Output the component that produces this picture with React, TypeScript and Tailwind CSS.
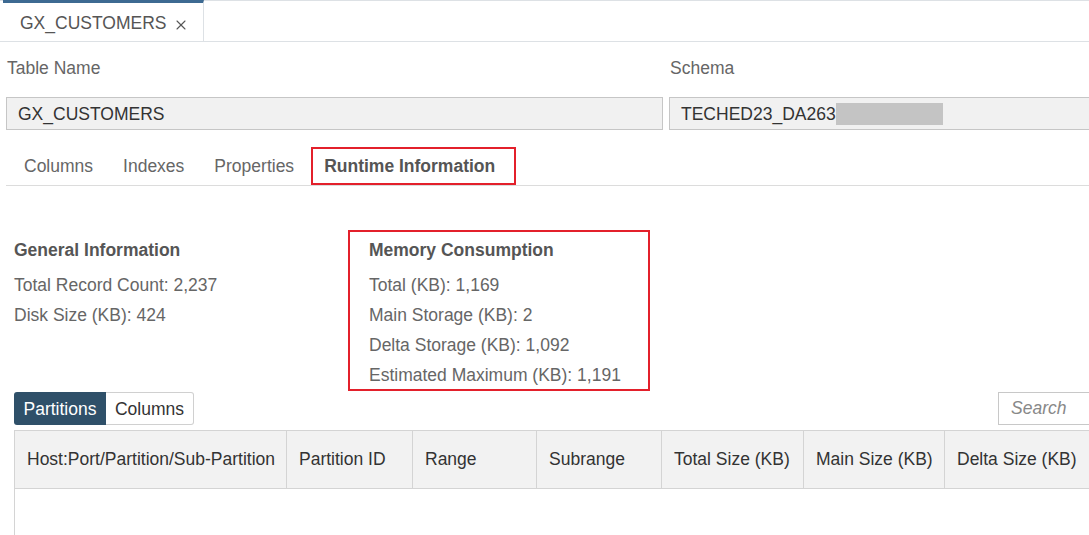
import { X } from "lucide-react";

const subTabs = ["Columns", "Indexes", "Properties"];

const headers = [
  { label: "Host:Port/Partition/Sub-Partition", w: "w-[272px]" },
  { label: "Partition ID", w: "w-[126px]" },
  { label: "Range", w: "w-[124px]" },
  { label: "Subrange", w: "w-[125px]" },
  { label: "Total Size (KB)", w: "w-[142px]" },
  { label: "Main Size (KB)", w: "w-[141px]" },
  { label: "Delta Size (KB)", w: "w-[160px]" },
];

export default function App() {
  return (
    <div
      className="w-[1089px] h-[535px] overflow-hidden bg-white text-[17.5px] text-[#666]"
      style={{ fontFamily: '"Liberation Sans", Arial, sans-serif' }}
    >
      {/* Editor tab bar */}
      <div className="flex h-[42px] border-t border-b border-[#dde1e5]">
        <div className="flex items-center pt-[2px] pl-[17px] ml-[3px] w-[201px] border-t-[3px] border-t-[#3d6a92] border-r border-r-[#dde1e5] -mt-px">
          <span className="text-[#555]">GX_CUSTOMERS</span>
          <X className="shrink-0 ml-[6px] mt-[4px] h-[16px] w-[16px] text-[#555]" strokeWidth={1.6} />
        </div>
      </div>

      {/* Name / schema */}
      <div className="flex gap-[6px] px-[6px]">
        <div className="w-[657px] shrink-0">
          <div className="h-[55px] leading-[53px] pl-px">Table Name</div>
          <div className="h-[33px] border border-[#c6c6c6] bg-[#f1f1f1] pl-[11px] leading-[33px] text-[#333]">
            GX_CUSTOMERS
          </div>
        </div>
        <div className="w-[440px] shrink-0">
          <div className="h-[55px] leading-[53px] pl-px">Schema</div>
          <div className="flex items-center pt-[2px] h-[33px] border border-[#c6c6c6] bg-[#f1f1f1] pl-[11px] text-[#333]">
            <span>TECHED23_DA263</span>
            <span className="inline-block -mt-[2px] h-[22px] w-[107px] bg-[#c4c4c4]" />
          </div>
        </div>
      </div>

      {/* Sub tabs */}
      <div className="mt-[17px] mx-[6px] flex h-[39px] pl-[3px] border-b border-[#dcdcdc] mr-0">
        {subTabs.map((t) => (
          <div key={t} className="px-[15px] h-[38px] leading-[38px]">
            {t}
          </div>
        ))}
        <div className="relative px-[15px] h-[38px] leading-[38px] font-bold text-[#555]">
          Runtime Information
          <div className="absolute top-0 bottom-0 left-[2px] -right-[6px] border-[2px] border-[#e3202b]" />
        </div>
      </div>

      {/* Runtime info */}
      <div className="flex mt-[44px] px-[14px]">
        <div className="w-[334px] pt-[5px]">
          <div className="h-[30px] leading-[30px] font-bold text-[#555] mb-[5px]">General Information</div>
          <div className="h-[30px] leading-[30px]">Total Record Count: 2,237</div>
          <div className="h-[30px] leading-[30px]">Disk Size (KB): 424</div>
        </div>
        <div className="w-[302px] border-[2px] border-[#e3202b] pl-[19px] pt-[3px]">
          <div className="h-[30px] leading-[30px] font-bold text-[#555] mb-[5px]">Memory Consumption</div>
          <div className="h-[30px] leading-[30px]">Total (KB): 1,169</div>
          <div className="h-[30px] leading-[30px]">Main Storage (KB): 2</div>
          <div className="h-[30px] leading-[30px]">Delta Storage (KB): 1,092</div>
          <div className="h-[29px] leading-[30px]">Estimated Maximum (KB): 1,191</div>
        </div>
      </div>

      {/* Toolbar */}
      <div className="flex items-center justify-between pl-[14px] mt-px">
        <div className="flex h-[33px]">
          <button className="w-[92px] pt-[1px] rounded-l-[3px] bg-[#2f5069] text-white">Partitions</button>
          <button className="w-[88px] pt-[1px] rounded-r-[3px] border border-l-0 border-[#d0d0d0] text-[#333]">Columns</button>
        </div>
        <div className="w-[120px] h-[33px] -mr-[29px] border border-[#c8c8c8] pl-[12px] leading-[31px] italic text-[#888]">
          Search
        </div>
      </div>

      {/* Table */}
      <div className="ml-[14px] mt-[5px] w-[1100px] border-l border-t border-[#d4d4d4]">
        <div className="flex h-[58px] bg-[#f2f2f2] border-b border-[#d4d4d4]">
          {headers.map((h) => (
            <div
              key={h.label}
              className={`${h.w} shrink-0 border-r border-[#d4d4d4] pl-[12px] flex items-center text-[#333]`}
            >
              {h.label}
            </div>
          ))}
        </div>
        <div className="h-[60px]" />
      </div>
    </div>
  );
}
